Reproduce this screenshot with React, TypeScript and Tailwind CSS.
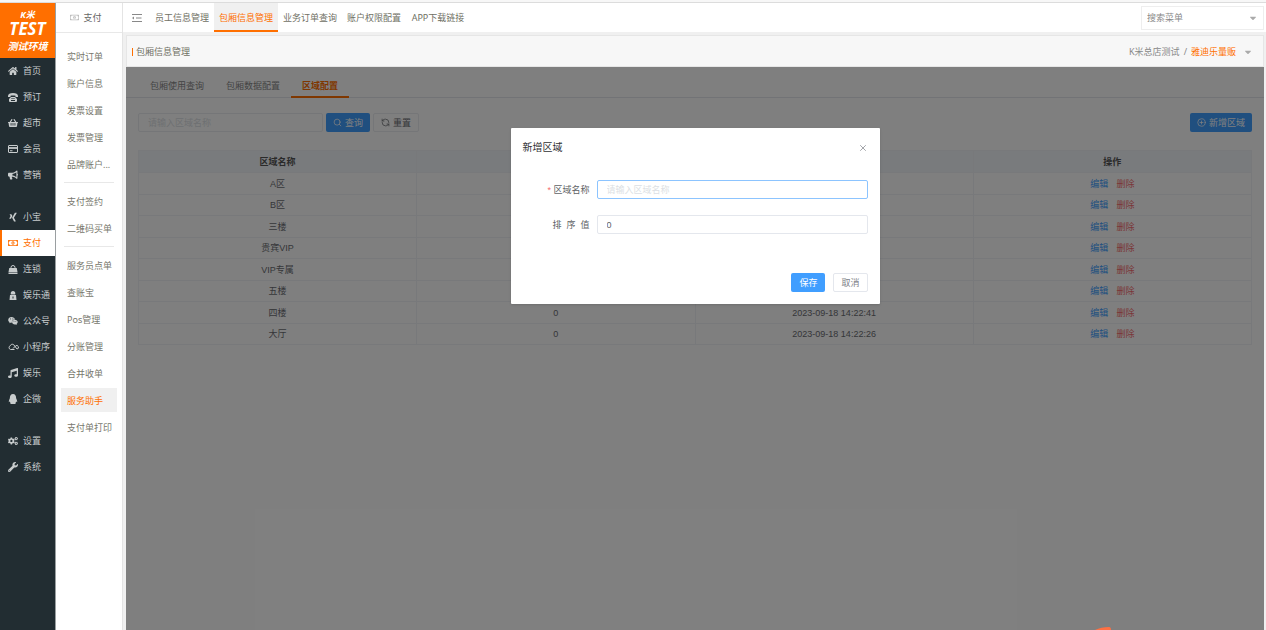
import React from "react";
import {
  FaBullhorn,
  FaCaretDown,
  FaCogs,
  FaHome,
  FaMusic,
  FaQq,
  FaRegMoneyBillAlt,
  FaShoppingBasket,
  FaWeixin,
  FaWrench,
  FaXing,
} from "react-icons/fa";
import { CirclePlus, RefreshCcw, Search, X } from "lucide-react";

const PhoneIcon = () => (
  <svg viewBox="0 0 20 18" className="h-[9px] w-[10px]" fill="currentColor">
    <path d="M0 8V6c0-3.500 4-6 10-6s10 2.500 10 6v2h-5V5.500C13 4.500 7 4.500 5 5.500V8z" />
    <path d="M6 8h8l4 4v4q0 2-2 2H4q-2 0-2-2v-4zm1 2v2h1.500v-2zm2.300 0v2h1.500v-2zm2.300 0v2H13v-2zM6 14v2h8v-2z" fillRule="evenodd" />
  </svg>
);

const CardIcon = () => (
  <svg viewBox="0 0 20 16" className="h-[8px] w-[10px]" fill="none" stroke="currentColor" strokeWidth="2">
    <rect x="1" y="1" width="18" height="14" rx="1" />
    <path d="M1 6h18" strokeWidth="3.500" />
    <path d="M4 11.500h5" />
  </svg>
);

const BagIcon = () => (
  <svg viewBox="0 0 20 18" className="h-[9px] w-[10px]" fill="currentColor">
    <path d="M6 7V5a4 4 0 0 1 8 0v2" fill="none" stroke="currentColor" strokeWidth="2" />
    <path d="M2.500 6h15L19 14H1zM1 15h18v3H1z" />
  </svg>
);

const SingerIcon = () => (
  <svg viewBox="0 0 16 18" className="h-[9px] w-[8px]" fill="currentColor">
    <path d="M8 0c3 0 4.500 2 4.500 4.500V7h-9V4.500C3.500 2 5 0 8 0zM2 8h12l1 10H1zm5 3v4h2v-4z" fillRule="evenodd" />
  </svg>
);

const MiniProgramIcon = () => (
  <svg viewBox="0 0 22 14" className="h-[8px] w-[11px]" fill="none" stroke="currentColor" strokeWidth="2">
    <path d="M13 12H5a4 4 0 0 1-.5-7.500C5.500 1.500 9 .5 11.500 2.500L18 11a3.500 3.500 0 1 0-3-6l-5 5" />
  </svg>
);

const FoldIcon = () => (
  <svg viewBox="0 0 10 10" className="h-[10px] w-[10px]" fill="none" stroke="currentColor">
    <path d="M0 1.500h10M4 5h5.500M0 8.500h10" />
    <path d="M0 5l2-1.500v3z" fill="currentColor" stroke="none" />
  </svg>
);

const sideGroups = [
  [
    { name: "首页", icon: FaHome },
    { name: "预订", icon: PhoneIcon },
    { name: "超市", icon: FaShoppingBasket },
    { name: "会员", icon: CardIcon },
    { name: "营销", icon: FaBullhorn },
  ],
  [
    { name: "小宝", icon: FaXing },
    { name: "支付", icon: FaRegMoneyBillAlt, active: true },
    { name: "连锁", icon: BagIcon },
    { name: "娱乐通", icon: SingerIcon },
    { name: "公众号", icon: FaWeixin },
    { name: "小程序", icon: MiniProgramIcon },
    { name: "娱乐", icon: FaMusic },
    { name: "企微", icon: FaQq },
  ],
  [
    { name: "设置", icon: FaCogs },
    { name: "系统", icon: FaWrench },
  ],
];

const menuGroups = [
  ["实时订单", "账户信息", "发票设置", "发票管理", "品牌账户..."],
  ["支付签约", "二维码买单"],
  ["服务员点单", "查账宝", "Pos管理", "分账管理", "合并收单", "服务助手", "支付单打印"],
];

const pages = ["员工信息管理", "包厢信息管理", "业务订单查询", "账户权限配置", "APP下载链接"];

const rows = [
  { name: "A区" },
  { name: "B区" },
  { name: "三楼" },
  { name: "贵宾VIP" },
  { name: "VIP专属" },
  { name: "五楼" },
  { name: "四楼", sort: 0, time: "2023-09-18 14:22:41" },
  { name: "大厅", sort: 0, time: "2023-09-18 14:22:26" },
];

const Sidebar = () => {
  return (
    <nav className="flex w-[56px] shrink-0 flex-col border-r border-[#9a9fa1] bg-[#222d32] text-[#c8cccd]">
      <div className="flex h-[55px] flex-col items-center bg-[#ff6f00] pt-[6px] font-['Open_Sans','Noto_Sans_CJK_SC',sans-serif] font-bold text-white italic">
        <span className="leading-[11px]">K米</span>
        <span className="text-[17px] leading-[17px]">TEST</span>
        <span className="text-[10px] leading-[18px]">测试环境</span>
      </div>
      <div className="flex flex-col gap-4">
        {sideGroups.map((group, i) => (
          <ul key={i}>
            {group.map((item: any) => (
              <li key={item.name}>
                <a
                  href="#"
                  className={`flex h-[26px] items-center gap-1 whitespace-nowrap ${
                    item.active ? "border-l-2 border-[#ff6f00] bg-white pl-[5px] text-[#ff6f00]" : "pl-[7px]"
                  }`}
                >
                  <span className="flex w-3 justify-center text-[10px]">
                    <item.icon />
                  </span>
                  {item.name}
                </a>
              </li>
            ))}
          </ul>
        ))}
      </div>
    </nav>
  );
};

const SubMenu = () => {
  return (
    <nav className="w-[67px] shrink-0 border-r border-[#e4e4e4] bg-white text-[#77776c]">
      <div className="flex h-[30px] items-center justify-center gap-1 border-b border-[#e8e8e8] pr-[6px] text-[#666]">
        <FaRegMoneyBillAlt className="text-[#bbb]" />
        支付
      </div>
      <div className="px-[5px] pt-[11px]">
        {menuGroups.map((group, i) => (
          <ul
            key={i}
            className={`flex flex-col gap-[3px] ${
              i > 0 ? "relative mt-[6px] pt-[7px] before:absolute before:inset-x-[3px] before:top-0 before:h-px before:bg-[#e8e8e8]" : ""
            }`}
          >
            {group.map((name) => (
              <li key={name}>
                <a
                  href="#"
                  className={`flex h-6 items-center pt-px pl-[6px] whitespace-nowrap ${
                    name === "服务助手" ? "bg-[#f0f0f0] text-[#ff6f00]" : ""
                  }`}
                >
                  {name}
                </a>
              </li>
            ))}
          </ul>
        ))}
      </div>
    </nav>
  );
};

const TopBar = () => {
  return (
    <header className="flex h-[29px] shrink-0 items-center justify-between bg-white pr-[2px] text-[#707064]">
      <div className="flex h-full items-center">
        <button className="mr-[8px] ml-[9px] text-[#888]" aria-label="收起菜单">
          <FoldIcon />
        </button>
        <ul className="flex h-full">
          {pages.map((name) => (
            <li key={name} className="h-full">
              <a
                href="#"
                className={`flex h-full w-16 items-center justify-center border-b-2 pt-[3px] whitespace-nowrap ${
                  name === "包厢信息管理" ? "border-b-[#ff6f00] bg-[#f0f0f0] text-[#ff6f00]" : "border-b-white"
                }`}
              >
                {name}
              </a>
            </li>
          ))}
        </ul>
      </div>
      <div className="relative flex items-center">
        <select aria-label="搜索菜单" className="h-6 w-[123px] appearance-none border border-[#eee] bg-white pl-[5px] text-[#888]">
          <option>搜索菜单</option>
        </select>
        <FaCaretDown className="pointer-events-none absolute right-[6px] text-[10px] text-[#aaa]" />
      </div>
    </header>
  );
};

const AreaTable = () => {
  return (
    <table className="w-full table-fixed border-collapse text-center text-[#6b6d72]">
      <thead>
        <tr className="h-[22px] bg-[#f3f6fa] text-[#555]">
          {["区域名称", "", "", "操作"].map((title, i) => (
            <th key={i} className="border border-[#f0f2f6] font-bold">
              {title}
            </th>
          ))}
        </tr>
      </thead>
      <tbody>
        {rows.map((row) => (
          <tr key={row.name} className="odd:h-[22px] even:h-[21px]">
            <td className="border border-[#f0f2f6]">{row.name}</td>
            <td className="border border-[#f0f2f6]">{row.sort}</td>
            <td className="border border-[#f0f2f6]">{row.time}</td>
            <td className="border border-[#f0f2f6]">
              <button className="mr-2 text-[#409eff]">编辑</button>
              <button className="text-[#f56c6c]">删除</button>
            </td>
          </tr>
        ))}
      </tbody>
    </table>
  );
};

const AreaDialog = () => {
  return (
    <div
      role="dialog"
      aria-labelledby="dialog-title"
      className="w-[369px] rounded-[1px] bg-white px-3 pt-3 pb-3 text-[#606266] shadow-sm"
    >
      <div className="flex h-4 items-center justify-between">
        <h2 id="dialog-title" className="text-[10px] text-[#303133]">
          新增区域
        </h2>
        <button aria-label="关闭" className="text-[#909399]">
          <X size={10} strokeWidth={2} />
        </button>
      </div>
      <form className="mt-6 flex flex-col gap-4">
        <div className="flex items-center">
          <label htmlFor="area-name" className="w-[74px] pr-[7px] text-right">
            <span className="text-[#f56c6c]">*</span> 区域名称
          </label>
          <input
            id="area-name"
            placeholder="请输入区域名称"
            className="h-[19px] min-w-0 flex-1 rounded-[2px] border border-[#8cc4ff] px-[9px] outline-none placeholder:text-[#dcdfe4]"
          />
        </div>
        <div className="flex items-center">
          <label htmlFor="area-sort" className="w-[74px] pr-[7px] text-right whitespace-pre">
            排  序  值
          </label>
          <input
            id="area-sort"
            defaultValue="0"
            className="h-[19px] min-w-0 flex-1 rounded-[2px] border border-[#e4e7ed] px-[9px] outline-none"
          />
        </div>
      </form>
      <div className="mt-[39px] flex justify-end gap-2">
        <button className="h-[19px] rounded-[2px] bg-[#409eff] px-2 text-white">保存</button>
        <button className="h-[19px] rounded-[2px] border border-[#e4e7ed] px-[7px] text-[#808288]">取消</button>
      </div>
    </div>
  );
};

const App = () => {
  return (
    <div className="flex h-screen flex-col overflow-hidden bg-[#f0f0f0] font-['Noto_Sans','Noto_Sans_CJK_SC',sans-serif] text-[9px] leading-[12px]">
      <div className="h-[3px] shrink-0 border-b border-[#dcdcdc] bg-[#f7f7f7]" />
      <div className="flex min-h-0 flex-1">
        <Sidebar />
        <SubMenu />
        <main className="flex min-w-0 flex-1 flex-col">
          <TopBar />
          <div className="mt-[3px] mr-[2px] ml-[3px] flex h-8 shrink-0 items-center justify-between border border-[#e6e6e6] bg-[#f7f7f7] pt-px pr-[10px] pl-[5px]">
            <h1 className="flex items-center gap-[3px] text-[#707064]">
              <span className="h-2 w-px bg-[#ff6f00]" />
              包厢信息管理
            </h1>
            <div className="flex items-center text-[#888]">
              K米总店测试
              <span className="mx-1">/</span>
              <span className="text-[#ff6f00]">雅迪乐量贩</span>
              <FaCaretDown className="ml-[7px] text-[10px] text-[#aaa]" />
            </div>
          </div>
          <section className="relative mr-[2px] ml-[3px] flex-1 bg-white font-['Liberation_Sans','Noto_Sans_CJK_SC',sans-serif]">
            <div className="flex h-[31px] border-b border-[#e4e7ed] px-[13px] pt-[6px] text-[#888]">
              <button className="h-[25px] border-b-2 border-transparent px-[11px] pt-[2px]">包厢使用查询</button>
              <button className="h-[25px] border-b-2 border-transparent px-[11px] pt-[2px]">包厢数据配置</button>
              <button className="h-[25px] border-b-2 border-[#ff6f00] px-[11px] pt-[2px] font-bold text-[#ff6f00]">区域配置</button>
            </div>
            <div className="px-3 pt-[15px]">
              <div className="mb-[18px] flex items-center gap-[3px]">
                <input
                  aria-label="区域名称"
                  placeholder="请输入区域名称"
                  className="h-[19px] w-[185px] rounded-[2px] border border-[#eaecf0] px-[9px] placeholder:text-[#dcdfe4]"
                />
                <button className="flex h-[19px] items-center gap-[3px] rounded-[2px] bg-[#409eff] px-[7px] text-white">
                  <Search size={9} />
                  查询
                </button>
                <button className="flex h-[19px] items-center gap-[3px] rounded-[2px] border border-[#eaecf0] px-[7px] text-[#6b6d72]">
                  <RefreshCcw size={9} />
                  重置
                </button>
                <button className="ml-auto flex h-[19px] items-center gap-[3px] rounded-[2px] bg-[#409eff] px-[7px] text-white">
                  <CirclePlus size={9} />
                  新增区域
                </button>
              </div>
              <AreaTable />
            </div>
            <div className="absolute inset-0 flex items-start justify-center bg-black/50 pt-[61px]">
              <AreaDialog />
            </div>
            <svg viewBox="0 0 16 3" className="absolute right-[153px] bottom-0 h-[3px] w-4 text-[#ff7043]">
              <path d="M0 3C4 1 9 0 14 0q2 0 2 3z" fill="currentColor" />
            </svg>
          </section>
        </main>
      </div>
    </div>
  );
};

export default App;
